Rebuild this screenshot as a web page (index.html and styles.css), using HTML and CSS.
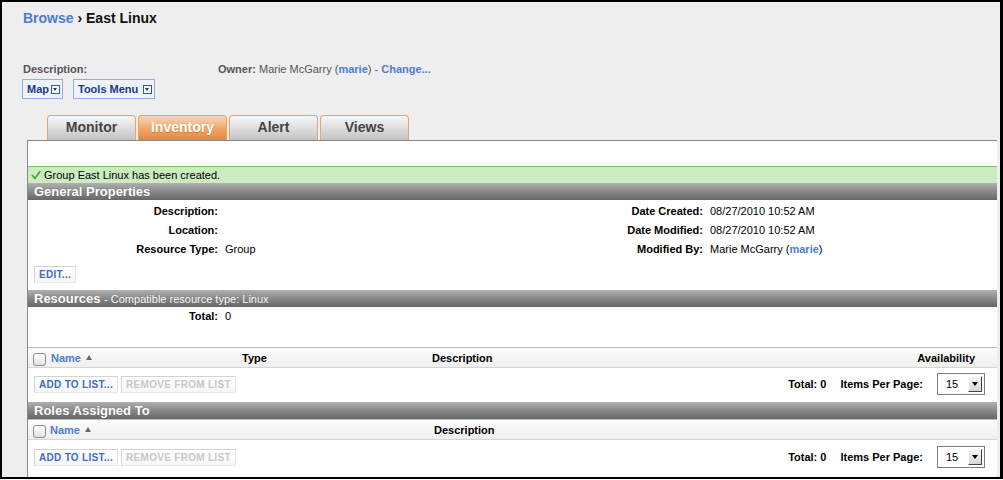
FILE: index.html
```html
<!DOCTYPE html>
<html>
<head>
<meta charset="utf-8">
<link rel="stylesheet" href="styles.css">
</head>
<body>
<div class="frame">
  <div class="crumb"><a class="link">Browse</a> › East Linux</div>
  <div class="meta">
    <span class="meta-desc"><b>Description:</b></span>
    <span class="meta-owner"><b>Owner:</b> Marie McGarry (<a class="link">marie</a>) - <a class="link">Change...</a></span>
  </div>
  <div class="menus">
    <span class="menu-btn">Map<i class="dd"></i></span>
    <span class="menu-btn tools">Tools Menu<i class="dd"></i></span>
  </div>
  <div class="main">
    <div class="tabs">
      <div class="tab">Monitor</div>
      <div class="tab active">Inventory</div>
      <div class="tab">Alert</div>
      <div class="tab">Views</div>
    </div>
    <div class="panel">
      <div class="spacer"></div>
      <div class="msg">
        <svg class="check" width="10" height="10" viewBox="0 0 10 10"><path d="M1.5 5.5 L4 8.3 L8.8 1.8" fill="none" stroke="#4ea43c" stroke-width="1.8" stroke-linejoin="round" stroke-linecap="round"/></svg>
        <span>Group East Linux has been created.</span>
      </div>
      <div class="sec">General Properties</div>
      <div class="props">
        <span class="lbl">Description:</span><span class="val"></span>
        <span class="lbl">Date Created:</span><span class="val">08/27/2010 10:52 AM</span>
        <span class="lbl">Location:</span><span class="val"></span>
        <span class="lbl">Date Modified:</span><span class="val">08/27/2010 10:52 AM</span>
        <span class="lbl">Resource Type:</span><span class="val">Group</span>
        <span class="lbl">Modified By:</span><span class="val">Marie McGarry (<a class="link">marie</a>)</span>
      </div>
      <div class="edit-row"><span class="btn">EDIT...</span></div>
      <div class="sec">Resources <span class="sec-sub">- Compatible resource type: Linux</span></div>
      <div class="props total-row">
        <span class="lbl">Total:</span><span class="val">0</span>
      </div>
      <div class="thead res-cols">
        <span class="cb"></span>
        <span class="th link">Name <i class="sort"></i></span>
        <span class="th">Type</span>
        <span class="th">Description</span>
        <span class="th avail">Availability</span>
      </div>
      <div class="actions">
        <span class="btn">ADD TO LIST...</span>
        <span class="btn disabled">REMOVE FROM LIST</span>
        <div class="pager">
          <span class="pl">Total: 0</span>
          <span class="pl">Items Per Page:</span>
          <span class="select"><span class="sv">15</span><span class="sa"><i></i></span></span>
        </div>
      </div>
      <div class="sec roles-sec">Roles Assigned To</div>
      <div class="thead roles-cols">
        <span class="cb"></span>
        <span class="th link">Name <i class="sort"></i></span>
        <span class="th">Description</span>
      </div>
      <div class="actions">
        <span class="btn">ADD TO LIST...</span>
        <span class="btn disabled">REMOVE FROM LIST</span>
        <div class="pager">
          <span class="pl">Total: 0</span>
          <span class="pl">Items Per Page:</span>
          <span class="select"><span class="sv">15</span><span class="sa"><i></i></span></span>
        </div>
      </div>
    </div>
  </div>
</div>
</body>
</html>
```

FILE: styles.css
```css
html, body {
  margin: 0;
  padding: 0;
  background: #fff;
}
body {
  font-family: "Liberation Sans", Arial, sans-serif;
  font-size: 11px;
  color: #000;
}
.frame {
  box-sizing: border-box;
  width: 1003px;
  height: 479px;
  border: 2px solid #000;
  border-right-width: 3px;
  background: #eeeeee;
  overflow: hidden;
}
.link {
  color: #4d7cd1;
  font-weight: bold;
  text-decoration: none;
}
.crumb {
  padding: 6px 0 0 21px;
  height: 20px;
  line-height: 20px;
  font-size: 14px;
  font-weight: bold;
  color: #111;
}
.meta {
  margin-top: 34px;
  padding-left: 21px;
  display: grid;
  grid-template-columns: 195px 1fr;
  line-height: 14px;
  color: #555;
}
.meta b { color: #555; }
.menus {
  margin: 3px 0 0 20px;
  display: flex;
  gap: 10px;
}
.menu-btn {
  box-sizing: border-box;
  height: 20px;
  display: flex;
  align-items: center;
  gap: 2px;
  padding: 0 2px 0 4px;
  border: 1px solid #8fb0e6;
  background: #eef2fb;
  color: #1b3a86;
  font-weight: bold;
}
.menu-btn.tools {
  gap: 5px;
  padding-right: 2px;
}
.dd {
  position: relative;
  box-sizing: border-box;
  width: 9px;
  height: 9px;
  border: 1px solid #36589e;
  background: #f6f8fd;
}
.dd::after {
  content: "";
  position: absolute;
  left: 1px;
  top: 2px;
  border-left: 2.5px solid transparent;
  border-right: 2.5px solid transparent;
  border-top: 3px solid #1b3a86;
}
.main {
  margin-top: 16px;
  padding: 0 3px 0 25px;
}
.tabs {
  display: flex;
  gap: 2px;
  margin-left: 20px;
  height: 25px;
}
.tab {
  box-sizing: border-box;
  width: 89px;
  height: 25px;
  border: 1px solid #eaa56c;
  border-bottom: none;
  border-radius: 4px 4px 0 0;
  background: linear-gradient(#f7f7f7, #dcdcdc 55%, #c2c2c2);
  text-align: center;
  line-height: 23px;
  font-size: 14px;
  font-weight: bold;
  color: #444;
}
.tab.active {
  background: linear-gradient(#fbd8b6, #f1a86a 50%, #e2893f);
  color: #fff;
  text-shadow: 0 1px 1px rgba(120, 60, 10, 0.35);
}
.panel {
  background: #fff;
  border-top: 1px solid #888;
  border-left: 1px solid #888;
  height: 400px;
}
.spacer { height: 25px; }
.msg {
  height: 16px;
  border-top: 1px solid #76c266;
  background: #cdebc1;
  display: flex;
  align-items: center;
  gap: 3px;
  padding-left: 3px;
  line-height: 16px;
}
.sec {
  height: 17px;
  line-height: 17px;
  padding-left: 6px;
  background: linear-gradient(#b0b0b0, #8c8c8c 45%, #666);
  color: #fff;
  font-size: 13px;
  font-weight: bold;
  text-shadow: 0 0 1px rgba(0, 0, 0, 0.3);
}
.sec-sub {
  font-size: 11px;
  font-weight: normal;
}
.props {
  display: grid;
  grid-template-columns: 190px 285px 186px 1fr;
  column-gap: 7px;
  padding-top: 2px;
}
.props > span {
  height: 19px;
  line-height: 19px;
}
.lbl {
  text-align: right;
  font-weight: bold;
}
.total-row { padding-top: 0; }
.edit-row {
  margin: 7px 0 7px;
  padding-left: 6px;
  display: flex;
}
.btn {
  box-sizing: border-box;
  height: 17px;
  display: inline-flex;
  align-items: center;
  padding: 0 4px;
  border: 1px solid #d3d3d3;
  border-right-color: #e8e8e8;
  border-bottom-color: #e8e8e8;
  background: linear-gradient(#fff, #f6f6f6);
  color: #3f6cc4;
  font-size: 10px;
  font-weight: bold;
  letter-spacing: 0.3px;
}
.btn.disabled { color: #c8c8c8; }
.thead {
  box-sizing: border-box;
  height: 21px;
  margin-top: 21px;
  border-top: 1px solid #b3bccd;
  border-bottom: 1px solid #d4d4d4;
  background: linear-gradient(#fcfcfc, #efefef);
  display: grid;
  align-items: center;
  padding: 0 22px 0 5px;
  font-weight: bold;
}
.res-cols { grid-template-columns: 18px 191px 190px 1fr auto; }
.roles-cols {
  margin-top: 0;
  grid-template-columns: 17px 384px 1fr;
}
.cb {
  box-sizing: border-box;
  width: 13px;
  height: 13px;
  border: 1px solid #8a8a8a;
  border-radius: 3px;
  background: linear-gradient(#fff, #e2e2e2);
  margin-top: 3px;
}
.sort {
  display: inline-block;
  vertical-align: 2px;
  margin-left: 2px;
  border-left: 3px solid transparent;
  border-right: 3px solid transparent;
  border-bottom: 5px solid #666;
}
.actions {
  display: flex;
  align-items: center;
  gap: 3px;
  height: 22px;
  margin-top: 5px;
  padding: 0 12px 0 6px;
}
.roles-sec { margin-top: 7px; }
.roles-cols + .actions { margin-top: 6px; }
.pager {
  margin-left: auto;
  display: flex;
  align-items: center;
  gap: 14px;
}
.pl { font-weight: bold; }
.select {
  box-sizing: border-box;
  width: 48px;
  height: 22px;
  border: 1px solid #7d7d7d;
  background: #fff;
  display: flex;
  align-items: center;
  padding: 0 2px 0 8px;
}
.sv { flex: 1; }
.sa {
  box-sizing: border-box;
  width: 14px;
  height: 16px;
  border: 1px solid;
  border-color: #fff #444 #444 #fff;
  background: linear-gradient(#f4f4f4, #d8d8d8);
  display: flex;
  align-items: center;
  justify-content: center;
}
.sa i {
  border-left: 3px solid transparent;
  border-right: 3px solid transparent;
  border-top: 4px solid #000;
}
```
